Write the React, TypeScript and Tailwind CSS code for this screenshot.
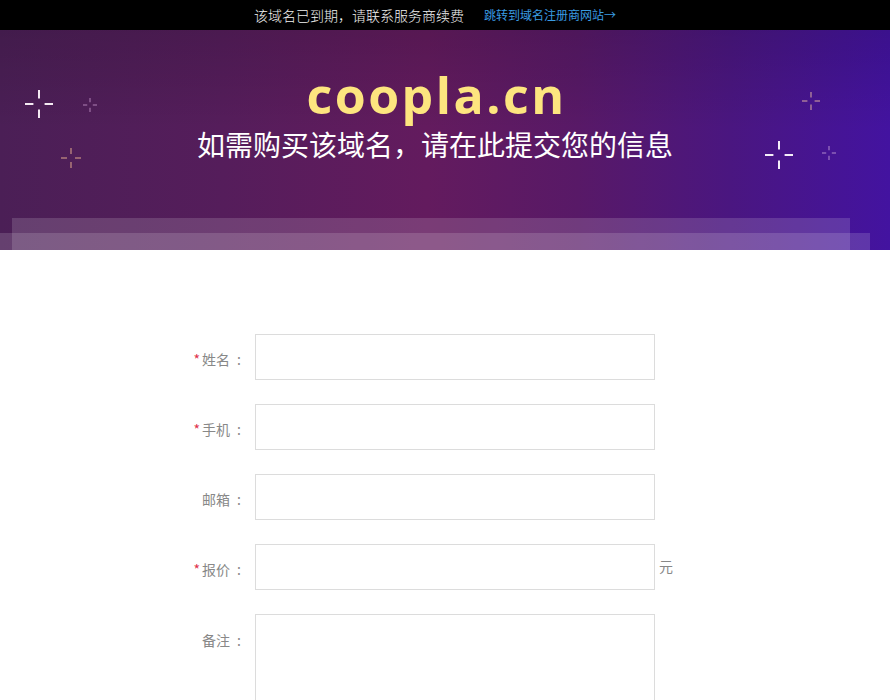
import React from "react";

const cjk = { fontFamily: '"Noto Sans CJK SC", "Noto Sans", sans-serif' };

function Sparkle({ size, color, className }: { size: number; color: string; className: string }) {
  const g = size * 0.2;
  const c = size / 2;
  return (
    <svg width={size} height={size} viewBox={`0 0 ${size} ${size}`} className={className}>
      <g stroke={color} strokeWidth={size > 20 ? 2 : 1.3} strokeLinecap="butt">
        <line x1={c} y1={0} x2={c} y2={c - g} />
        <line x1={c} y1={c + g} x2={c} y2={size} />
        <line x1={0} y1={c} x2={c - g} y2={c} />
        <line x1={c + g} y1={c} x2={size} y2={c} />
      </g>
    </svg>
  );
}

const fields = [
  { label: "姓名", required: true },
  { label: "手机", required: true },
  { label: "邮箱", required: false },
  { label: "报价", required: true, suffix: "元" },
];

export default function App() {
  return (
    <div className="w-[890px] min-h-[700px] bg-white" style={cjk}>
      <div className="h-[30px] bg-black w-[890px]">
        <div className="w-[870px] h-full flex items-center justify-center gap-5">
          <span className="text-[14px] text-[#f2f2f2] font-light">该域名已到期，请联系服务商续费</span>
          <a className="text-[12px] text-[#3a9be2]">跳转到域名注册商网站→</a>
        </div>
      </div>

      <div className="relative h-[220px] overflow-hidden bg-[linear-gradient(90deg,#4b1f56_0%,#551d5b_25%,#631b5e_48%,#581967_65%,#4a1680_82%,#4313a0_100%)]">
        <div className="absolute inset-0 bg-[linear-gradient(180deg,rgba(0,0,0,0.12)_0%,rgba(0,0,0,0)_45%)]" />
        <Sparkle size={28} color="#f4e9f2" className="absolute left-[25px] top-[60px]" />
        <Sparkle size={14} color="#9a6aa0" className="absolute left-[83px] top-[68px]" />
        <Sparkle size={20} color="#c08a80" className="absolute left-[61px] top-[118px]" />
        <Sparkle size={18} color="#b98a9c" className="absolute left-[802px] top-[62px]" />
        <Sparkle size={28} color="#f4eef8" className="absolute left-[765px] top-[111px]" />
        <Sparkle size={14} color="#9a70c0" className="absolute left-[822px] top-[116px]" />

        <div className="relative w-[870px] flex flex-col items-center pt-[37px]">
          <div
            className="text-[50px] leading-[57px] font-bold text-[#fde57f] tracking-[2.5px] pl-[3px]"
            style={{ fontFamily: '"Open Sans", "Noto Sans", sans-serif' }}
          >
            coopla.cn
          </div>
          <div className="text-[28px] leading-[36px] text-white mt-[2px]">如需购买该域名，请在此提交您的信息</div>
        </div>

        <div className="absolute left-[12px] top-[188px] w-[838px] h-[32px] bg-white/15" />
        <div className="absolute left-0 top-[203px] w-[870px] h-[17px] bg-white/15" />
      </div>

      <div className="pt-[84px] flex flex-col gap-[24px]">
        {fields.map((f) => (
          <div key={f.label} className="flex items-center">
            <div className="w-[255px] shrink-0 pr-[14px] pt-[4px] text-right text-[14px] text-[#888]">
              {f.required && <span className="text-[#e0314c] mr-[2px]">*</span>}
              {f.label}
              <span className="ml-[7px]">:</span>
            </div>
            <input className="w-[400px] h-[46px] border border-[#dcdcdc] outline-none px-2" />
            {f.suffix && <span className="ml-[4px] -mt-[2px] text-[14px] text-[#888]">{f.suffix}</span>}
          </div>
        ))}
        <div className="flex items-start">
          <div className="w-[255px] shrink-0 pr-[14px] pt-[16px] text-right text-[14px] text-[#888]">
            备注<span className="ml-[7px]">:</span>
          </div>
          <textarea className="w-[400px] h-[120px] border border-[#dcdcdc] outline-none px-2 resize-none" />
        </div>
      </div>
    </div>
  );
}
